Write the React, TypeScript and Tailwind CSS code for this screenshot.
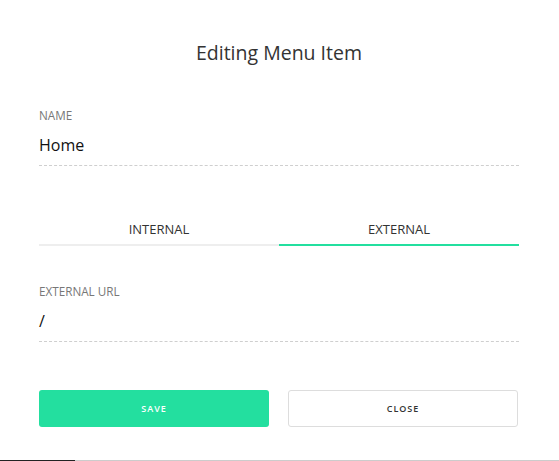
export default function App() {
    return (
        <div className="w-[559px] h-[461px] flex flex-col bg-white font-['Open_Sans',sans-serif]">
            <div className="w-[480px] ml-[39px] flex-1">
                <h2 className="pt-[39px] text-center text-[19.5px] leading-[28px] text-[#333]">Editing Menu Item</h2>

                <div className="mt-[40px]">
                    <p className="text-[11.7px] leading-[16px] text-[#777] uppercase">Name</p>
                    <p className="mt-[10px] pb-[8px] text-[16px] leading-[24px] text-[#111] border-b border-dashed border-[#cfcfcf]">
                        Home
                    </p>
                </div>

                <div className="mt-[53px] grid grid-cols-2">
                    <div className="pb-[5px] text-center text-[13px] leading-[20px] font-medium text-[#333] border-b-2 border-[#eeeeee]">
                        INTERNAL
                    </div>
                    <div className="pb-[5px] text-center text-[13px] leading-[20px] font-medium text-[#333] border-b-2 border-[#23df9f]">
                        EXTERNAL
                    </div>
                </div>

                <div className="mt-[37px]">
                    <p className="text-[11.7px] leading-[16px] text-[#777] uppercase">External URL</p>
                    <p className="mt-[10px] pb-[8px] text-[16px] leading-[24px] text-[#111] border-b border-dashed border-[#cfcfcf]">
                        /
                    </p>
                </div>

                <div className="mt-[48px] flex gap-[19px]">
                    <button className="w-[230px] h-[37px] rounded-[3px] bg-[#23df9f] text-white text-[9px] font-semibold tracking-[1px]">
                        SAVE
                    </button>
                    <button className="w-[230px] h-[37px] rounded-[3px] border border-[#dddddd] bg-white text-[#333] text-[9px] font-semibold tracking-[1px]">
                        CLOSE
                    </button>
                </div>
            </div>
            <div className="h-px flex bg-[#cccccc]">
                <div className="w-[75px] bg-[#222]" />
            </div>
        </div>
    );
}
